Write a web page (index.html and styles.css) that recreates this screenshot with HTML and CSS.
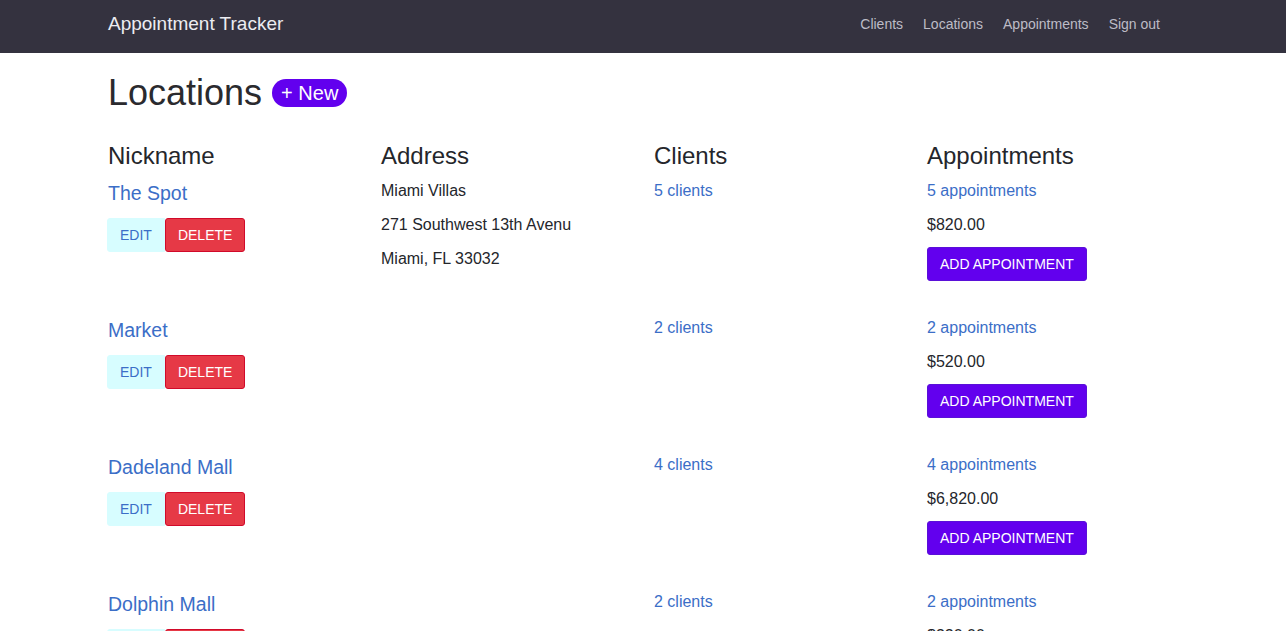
FILE: index.html
```html
<!DOCTYPE html>
<html lang="en">
<head>
<meta charset="utf-8">
<title>Appointment Tracker</title>
<link rel="stylesheet" href="styles.css">
</head>
<body>
<nav class="navbar">
  <div class="container navbar-inner">
    <a class="brand" href="#">Appointment Tracker</a>
    <ul class="nav-links">
      <li><a href="#">Clients</a></li>
      <li><a href="#">Locations</a></li>
      <li><a href="#">Appointments</a></li>
      <li><a href="#">Sign out</a></li>
    </ul>
  </div>
</nav>
<main class="container">
  <div class="title-row">
    <h1 class="title">Locations</h1>
    <a class="pill" href="#">+ New</a>
  </div>
  <div class="grid head">
    <h4>Nickname</h4>
    <h4>Address</h4>
    <h4>Clients</h4>
    <h4>Appointments</h4>
  </div>

  <div class="grid loc">
    <div>
      <a class="nick" href="#">The Spot</a>
      <div class="actions"><a class="btn btn-edit" href="#">Edit</a><a class="btn btn-delete" href="#">Delete</a></div>
    </div>
    <div>
      <p>Miami Villas</p>
      <p>271 Southwest 13th Avenu</p>
      <p>Miami, FL 33032</p>
    </div>
    <div><p><a href="#">5 clients</a></p></div>
    <div>
      <p><a href="#">5 appointments</a></p>
      <p>$820.00</p>
      <a class="btn btn-add" href="#">Add appointment</a>
    </div>
  </div>

  <div class="grid loc">
    <div>
      <a class="nick" href="#">Market</a>
      <div class="actions"><a class="btn btn-edit" href="#">Edit</a><a class="btn btn-delete" href="#">Delete</a></div>
    </div>
    <div></div>
    <div><p><a href="#">2 clients</a></p></div>
    <div>
      <p><a href="#">2 appointments</a></p>
      <p>$520.00</p>
      <a class="btn btn-add" href="#">Add appointment</a>
    </div>
  </div>

  <div class="grid loc">
    <div>
      <a class="nick" href="#">Dadeland Mall</a>
      <div class="actions"><a class="btn btn-edit" href="#">Edit</a><a class="btn btn-delete" href="#">Delete</a></div>
    </div>
    <div></div>
    <div><p><a href="#">4 clients</a></p></div>
    <div>
      <p><a href="#">4 appointments</a></p>
      <p>$6,820.00</p>
      <a class="btn btn-add" href="#">Add appointment</a>
    </div>
  </div>

  <div class="grid loc">
    <div>
      <a class="nick" href="#">Dolphin Mall</a>
      <div class="actions"><a class="btn btn-edit" href="#">Edit</a><a class="btn btn-delete" href="#">Delete</a></div>
    </div>
    <div></div>
    <div><p><a href="#">2 clients</a></p></div>
    <div>
      <p><a href="#">2 appointments</a></p>
      <p>$320.00</p>
      <a class="btn btn-add" href="#">Add appointment</a>
    </div>
  </div>
</main>
</body>
</html>
```
FILE: styles.css
```css
* { box-sizing: border-box; }
html, body {
  margin: 0;
  padding: 0;
}
body {
  font-family: "Liberation Sans", Arial, sans-serif;
  font-size: 16px;
  line-height: 24px;
  color: #24262b;
  background: #fff;
}
a { text-decoration: none; color: #3b6ec7; }

.container {
  width: 1070px;
  margin: 0 auto;
  padding-right: 15px;
}

.navbar {
  background: #34323f;
  height: 53px;
}
.navbar-inner {
  display: flex;
  align-items: center;
  justify-content: space-between;
  height: 53px;
  padding-bottom: 5px;
}
.brand {
  color: #ececf1;
  font-size: 19px;
  line-height: 24px;
}
.nav-links {
  list-style: none;
  margin: 0;
  padding: 0 3px 0 0;
  display: flex;
  gap: 20px;
}
.nav-links a {
  color: #bdbcc6;
  font-size: 14px;
  line-height: 20px;
}

.title-row {
  display: flex;
  align-items: center;
  gap: 10px;
  margin-top: 18px;
  height: 43px;
}
.title {
  margin: 0;
  font-size: 36px;
  font-weight: 400;
  line-height: 43px;
  color: #2a2a2e;
}
.pill {
  background: #6200ee;
  color: #fff;
  font-size: 20px;
  line-height: 28px;
  height: 28px;
  padding: 0 9px;
  border-radius: 14px;
}

.grid {
  display: grid;
  grid-template-columns: 273px 273px 273px 1fr;
}
.head {
  margin-top: 27px;
}
.head h4 {
  margin: 0;
  font-size: 24px;
  font-weight: 400;
  line-height: 29px;
}
.loc {
  margin-top: 8px;
  margin-bottom: 34px;
}
.loc p {
  margin: 0 0 10px;
  padding-top: 1px;
  line-height: 23px;
}
.nick {
  display: block;
  font-size: 19.5px;
  line-height: 30px;
}
.actions {
  display: flex;
  margin-top: 10px;
  margin-left: -1px;
}
.btn {
  display: inline-block;
  font-size: 14px;
  line-height: 20px;
  padding: 6px 12px;
  border: 1px solid transparent;
  border-radius: 3px;
  text-transform: uppercase;
}
.btn-edit {
  background: #d7fdff;
  border-color: #d7fdff;
  color: #3b6ec7;
  border-radius: 3px 0 0 3px;
}
.btn-delete {
  background: #e63946;
  border-color: #d10a2a;
  color: #fff;
}
.btn-add {
  margin-top: 1px;
  background: #6200ee;
  border-color: #5a10d8;
  color: #fff;
}
```
